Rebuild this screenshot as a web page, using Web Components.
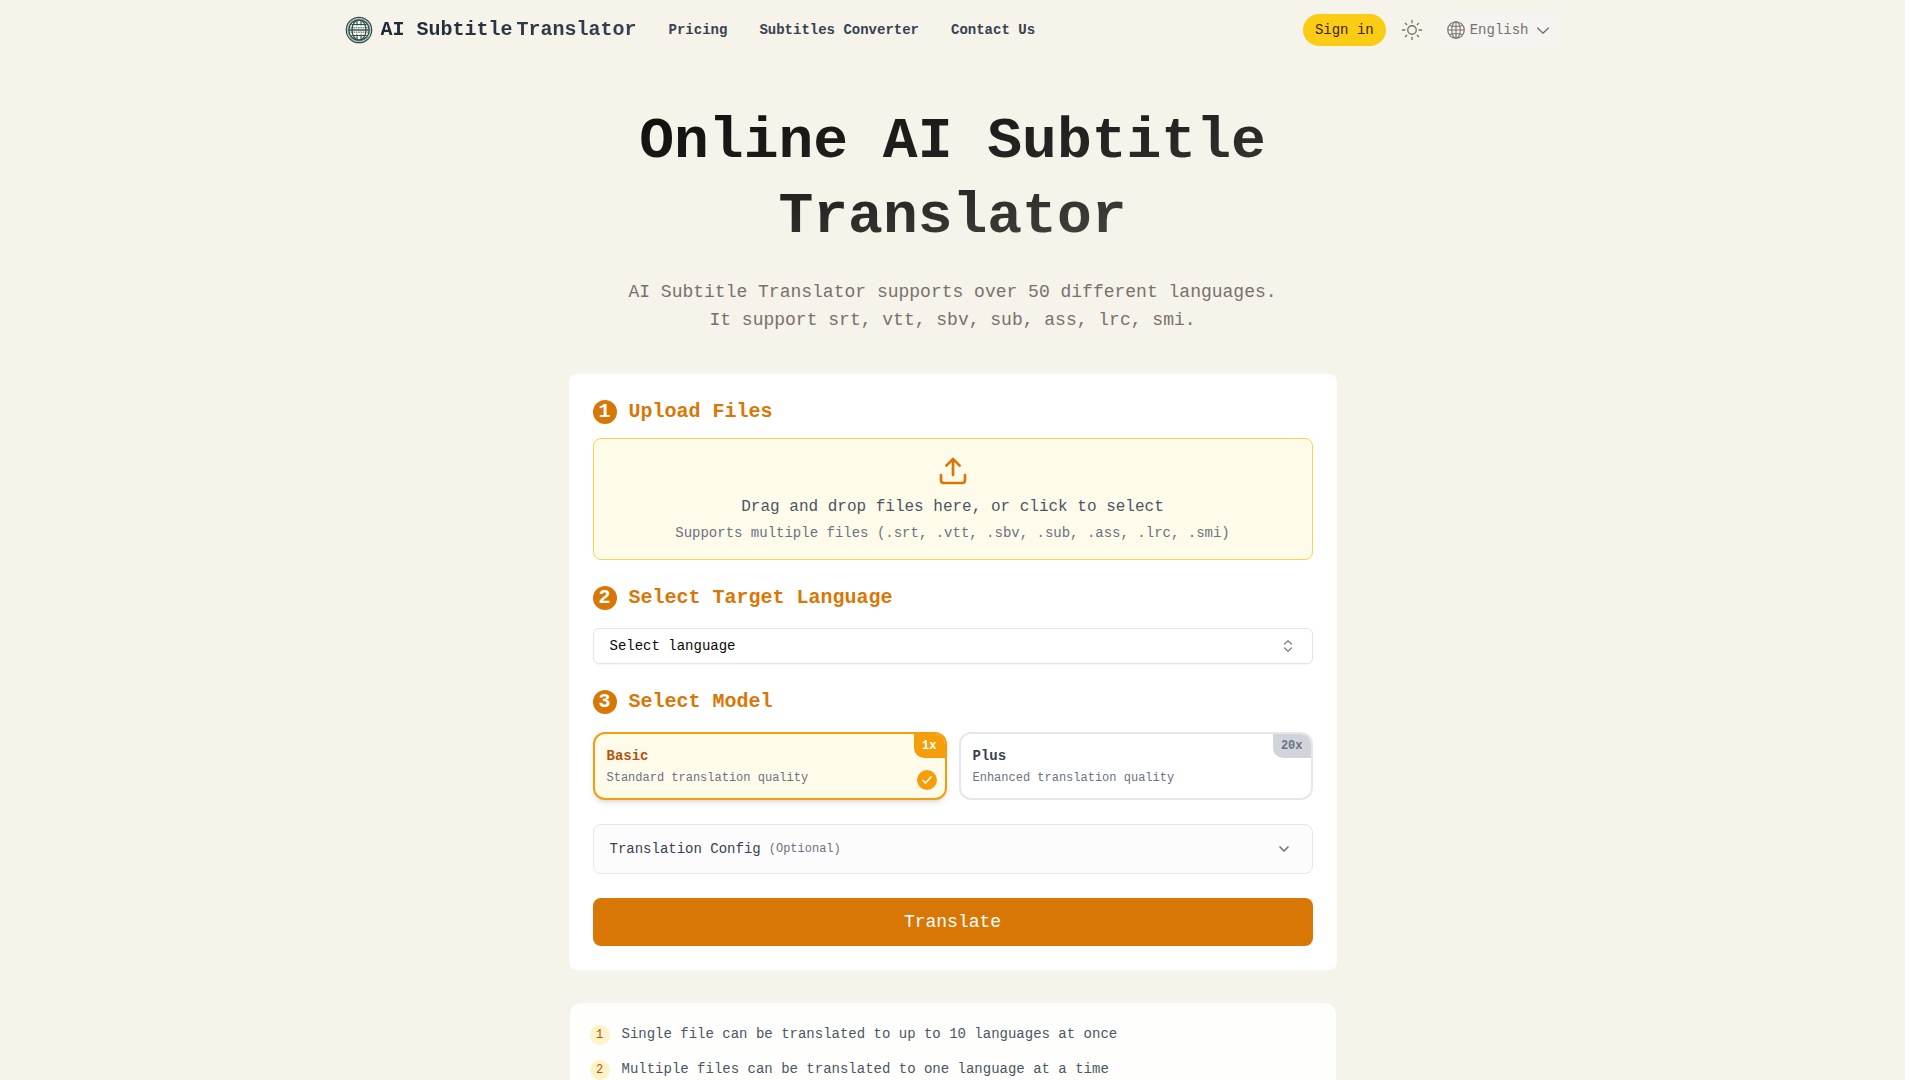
<!DOCTYPE html>
<html lang="en">
<head>
<meta charset="utf-8">
<meta name="viewport" content="width=device-width, initial-scale=1">
<title>AI Subtitle Translator</title>
<style>
    html {
        background: #fff;
        height: 100%;
        overflow: hidden;
    }
    body {
        margin: 0 15px 0 0;
        min-height: 100%;
        background: #f6f3eb;
        font-family: "Liberation Mono", monospace;
        font-size: 14px;
        line-height: 20px;
        color: #4b5563;
    }
    main {
        max-width: 768px;
        margin: 0 auto;
        padding: 44px 0 40px;
    }
</style>
</head>
<body>
<site-header></site-header>
<main>
    <page-hero>
        Online AI Subtitle Translator
        <span slot="lead">AI Subtitle Translator supports over 50 different languages.<br>It support srt, vtt, sbv, sub, ass, lrc, smi.</span>
    </page-hero>
    <translate-card>
        <form-step number="1" heading="Upload Files" tight>
            <file-drop>
                Drag and drop files here, or click to select
                <span slot="hint">Supports multiple files (.srt, .vtt, .sbv, .sub, .ass, .lrc, .smi)</span>
            </file-drop>
        </form-step>
        <form-step number="2" heading="Select Target Language">
            <language-select></language-select>
        </form-step>
        <form-step number="3" heading="Select Model">
            <model-picker></model-picker>
        </form-step>
        <config-toggle>Translation Config<span slot="note">(Optional)</span></config-toggle>
        <submit-button>Translate</submit-button>
    </translate-card>
    <tip-list>
        <tip-item number="1">Single file can be translated to up to 10 languages at once</tip-item>
        <tip-item number="2">Multiple files can be translated to one language at a time</tip-item>
    </tip-list>
</main>

<script>
// small helper: every element clones its template into an open root
function template(html) {
    const t = document.createElement("template");
    t.innerHTML = html;
    return t;
}

class BaseElement extends HTMLElement {
    constructor() {
        super();
        this.attachShadow({mode: "open"});
        this.shadowRoot.appendChild(this.constructor.template.content.cloneNode(true));
    }
}

class SiteHeader extends BaseElement {
    static template = template(/* html */`
        <style>
            :host {
                display: block;
            }
            .bar {
                display: flex;
                align-items: center;
                justify-content: space-between;
                box-sizing: border-box;
                max-width: 1280px;
                min-height: 60px;
                margin: 0 auto;
                padding: 0 32px;
            }
            .left, nav {
                display: flex;
                align-items: center;
                gap: 32px;
            }
            .right {
                display: flex;
                align-items: center;
                gap: 16px;
            }
            a {
                color: #374151;
                font-weight: 700;
                text-decoration: none;
            }
            .brand {
                display: flex;
                align-items: center;
                gap: 8px;
                font-size: 20px;
                line-height: 28px;
            }
            .words {
                display: flex;
                gap: 4px;
                background: linear-gradient(to right, #1f2937, #374151);
                background-clip: text;
                -webkit-background-clip: text;
                color: transparent;
            }
            svg {
                display: block;
            }
            button {
                display: flex;
                align-items: center;
                border: none;
                font: inherit;
                color: #78716c;
                cursor: pointer;
            }
            .signin {
                padding: 6px 12px;
                border-radius: 16px;
                background: #facc15;
                color: #422006;
            }
            .theme {
                padding: 0;
                background: none;
            }
            .lang {
                gap: 4px;
                padding: 8px;
                border-radius: 8px;
                background: #f5f4f0;
            }
        </style>
        <header class="bar">
            <div class="left">
                <a class="brand" href="#">
                    <svg width="28" height="28" viewBox="0 0 28 28" fill="none" stroke="#2f4f4b">
                        <circle cx="14" cy="14" r="12.7" stroke-width="1.2"/>
                        <circle cx="14" cy="14" r="11.4" stroke="#a3b0a9" stroke-width="1"/>
                        <circle cx="14" cy="14" r="10.2" stroke-width="1.2"/>
                        <ellipse cx="14" cy="14" rx="7" ry="10" stroke-width="1.2"/>
                        <path d="M12 4v5.5M16 4v5.5M12 18.5V24M16 18.5V24" stroke-width="1.1"/>
                        <path d="M6.5 8.5h15M6.5 19.5h15" stroke-width="1.1"/>
                        <path d="M4 14h20" stroke-width="1.4"/>
                        <path d="M4 11.8h20M4 16.2h20" stroke-width=".9" stroke-dasharray="1.5 .8"/>
                    </svg>
                    <span class="words"><span>AI Subtitle</span><span>Translator</span></span>
                </a>
                <nav>
                    <a href="#">Pricing</a>
                    <a href="#">Subtitles Converter</a>
                    <a href="#">Contact Us</a>
                </nav>
            </div>
            <div class="right">
                <button class="signin">Sign in</button>
                <button class="theme" aria-label="Toggle theme">
                    <svg width="20" height="20" viewBox="0 0 15 15" fill="none" stroke="currentColor" stroke-width="1">
                        <circle cx="7.5" cy="7.5" r="3.2"/>
                        <path d="M7.5 0v2.5M7.5 12.5V15M0 7.5h2.5M12.5 7.5H15M2.3 2.3l1.5 1.5M11.2 11.2l1.5 1.5M12.7 2.3l-1.5 1.5M3.8 11.2l-1.5 1.5"/>
                    </svg>
                </button>
                <button class="lang">
                    <svg width="20" height="20" viewBox="0 0 15 15" fill="none" stroke="currentColor" stroke-width=".8">
                        <circle cx="7.5" cy="7.5" r="6.2" stroke-width=".9"/>
                        <ellipse cx="7.5" cy="7.5" rx="3.2" ry="6.2"/>
                        <path d="M7.5 1.5v12M1.5 7.5h12M2.5 4.1q5 1.5 10 0M2.5 10.9q5-1.5 10 0"/>
                    </svg>
                    <span>English</span>
                    <svg width="20" height="20" viewBox="0 0 15 15" fill="none" stroke="currentColor" stroke-linecap="round" stroke-linejoin="round">
                        <path d="M3.5 6l4 4 4-4"/>
                    </svg>
                </button>
            </div>
        </header>
    `);
}

class PageHero extends BaseElement {
    static template = template(/* html */`
        <style>
            :host {
                display: block;
                text-align: center;
            }
            h1 {
                margin: 0 0 24px;
                font-size: 58px;
                line-height: 75px;
                font-weight: 700;
                background: linear-gradient(to bottom right, #0c0a09, #292524, #57534e);
                background-clip: text;
                -webkit-background-clip: text;
                color: transparent;
            }
            p {
                margin: 0 0 40px;
                font-size: 18px;
                line-height: 28px;
                color: #78716c;
            }
        </style>
        <h1><slot></slot></h1>
        <p><slot name="lead"></slot></p>
    `);
}

class TranslateCard extends BaseElement {
    static template = template(/* html */`
        <style>
            :host {
                display: flex;
                flex-direction: column;
                gap: 24px;
                padding: 24px;
                border-radius: 8px;
                background: #fff;
            }
        </style>
        <slot></slot>
    `);
}

class FormStep extends BaseElement {
    static template = template(/* html */`
        <style>
            :host {
                display: flex;
                flex-direction: column;
                gap: 16px;
            }
            :host([tight]) {
                gap: 12px;
            }
            h2 {
                display: flex;
                align-items: center;
                gap: 12px;
                margin: 0;
                font-size: 20px;
                line-height: 28px;
                font-weight: 700;
                color: #d97706;
            }
            .number {
                width: 24px;
                height: 24px;
                border-radius: 50%;
                background: #d97706;
                color: #fff;
                line-height: 24px;
                text-align: center;
            }
        </style>
        <h2><span class="number"></span><span class="text"></span></h2>
        <slot></slot>
    `);

    connectedCallback() {
        this.shadowRoot.querySelector(".number").textContent = this.getAttribute("number");
        this.shadowRoot.querySelector(".text").textContent = this.getAttribute("heading");
    }
}

class FileDrop extends BaseElement {
    static template = template(/* html */`
        <style>
            :host {
                display: block;
            }
            label {
                position: relative;
                display: flex;
                flex-direction: column;
                align-items: center;
                padding: 16px;
                border: 1px solid #fcd34d;
                border-radius: 8px;
                background: #fffbeb;
                cursor: pointer;
            }
            input {
                position: absolute;
                inset: 0;
                width: 100%;
                opacity: 0;
            }
            .main {
                margin: 8px 0 4px;
                font-size: 16px;
                line-height: 24px;
            }
            .hint {
                color: #6b7280;
            }
        </style>
        <label>
            <input type="file" multiple>
            <svg width="32" height="32" viewBox="0 0 24 24" fill="none" stroke="#d97706" stroke-width="2" stroke-linecap="round" stroke-linejoin="round">
                <path d="M21 15v4a2 2 0 0 1-2 2H5a2 2 0 0 1-2-2v-4"/>
                <path d="M17 8l-5-5-5 5M12 3v12"/>
            </svg>
            <span class="main"><slot></slot></span>
            <span class="hint"><slot name="hint"></slot></span>
        </label>
    `);
}

class LanguageSelect extends BaseElement {
    static template = template(/* html */`
        <style>
            :host {
                display: grid;
                align-items: center;
            }
            select, svg {
                grid-area: 1 / 1;
            }
            select {
                appearance: none;
                box-sizing: border-box;
                width: 100%;
                height: 36px;
                padding: 0 16px;
                border: 1px solid #e5e5e5;
                border-radius: 6px;
                background: #fff;
                box-shadow: 0 1px 2px 0 rgb(0 0 0 / 0.05);
                font: inherit;
                color: #0a0a0a;
            }
            svg {
                justify-self: end;
                margin-right: 17px;
                opacity: 0.5;
                pointer-events: none;
            }
        </style>
        <select aria-label="Target language">
            <option>Select language</option>
        </select>
        <svg width="16" height="16" viewBox="0 0 24 24" fill="none" stroke="#0a0a0a" stroke-width="2" stroke-linecap="round" stroke-linejoin="round">
            <path d="M7 15l5 5 5-5M7 9l5-5 5 5"/>
        </svg>
    `);
}

class ModelPicker extends BaseElement {
    static template = template(/* html */`
        <style>
            :host {
                display: grid;
                grid-template-columns: 1fr 1fr;
                gap: 12px;
            }
            label {
                position: relative;
                display: flex;
                flex-direction: column;
                gap: 4px;
                padding: 12px;
                border: 2px solid #e5e7eb;
                border-radius: 12px;
                background: #fff;
                overflow: hidden;
                cursor: pointer;
            }
            input {
                position: absolute;
                inset: 0;
                margin: 0;
                opacity: 0;
            }
            .name {
                font-weight: 700;
                color: #374151;
            }
            .about {
                font-size: 12px;
                line-height: 16px;
                color: #6b7280;
            }
            .rate {
                position: absolute;
                top: 0;
                right: 0;
                padding: 4px 8px;
                border-bottom-left-radius: 10px;
                background: #d1d5db;
                color: #6b7280;
                font-size: 12px;
                line-height: 16px;
                font-weight: 700;
            }
            .tick {
                position: absolute;
                right: 8px;
                bottom: 8px;
                display: none;
                place-items: center;
                width: 20px;
                height: 20px;
                border-radius: 50%;
                background: #f59e0b;
            }
            label:has(:checked) {
                border-color: #f59e0b;
                background: #fffbeb;
                box-shadow: 0 4px 6px -1px rgb(0 0 0 / 0.1), 0 2px 4px -2px rgb(0 0 0 / 0.1);
            }
            :checked ~ .name {
                color: #b45309;
            }
            :checked ~ .rate {
                background: #f59e0b;
                color: #fff;
            }
            :checked ~ .tick {
                display: grid;
            }
        </style>
        <label>
            <input type="radio" name="model" checked>
            <span class="name">Basic</span>
            <span class="about">Standard translation quality</span>
            <span class="rate">1x</span>
            <span class="tick">
                <svg width="12" height="12" viewBox="0 0 24 24" fill="none" stroke="#fff" stroke-width="3" stroke-linecap="round" stroke-linejoin="round">
                    <path d="M4 13l5 5L20 6"/>
                </svg>
            </span>
        </label>
        <label>
            <input type="radio" name="model">
            <span class="name">Plus</span>
            <span class="about">Enhanced translation quality</span>
            <span class="rate">20x</span>
        </label>
    `);
}

class ConfigToggle extends BaseElement {
    static template = template(/* html */`
        <style>
            :host {
                display: block;
            }
            button {
                display: flex;
                align-items: center;
                gap: 8px;
                width: 100%;
                padding: 12px 16px;
                border: 1px solid #e5e7eb;
                border-radius: 8px;
                background: #fcfcfc;
                font: inherit;
                color: #374151;
                cursor: pointer;
            }
            .note {
                font-size: 12px;
                color: #6b7280;
            }
            svg {
                margin-left: auto;
                padding: 4px;
            }
        </style>
        <button aria-expanded="false">
            <span><slot></slot></span>
            <span class="note"><slot name="note"></slot></span>
            <svg width="16" height="16" viewBox="0 0 24 24" fill="none" stroke="#6b7280" stroke-width="2.5" stroke-linecap="round" stroke-linejoin="round">
                <path d="M6 9l6 6 6-6"/>
            </svg>
        </button>
    `);
}

class SubmitButton extends BaseElement {
    static template = template(/* html */`
        <style>
            :host {
                display: block;
            }
            button {
                display: block;
                width: 100%;
                padding: 10px 16px;
                border: none;
                border-radius: 8px;
                background: #d97706;
                color: #fff;
                font: inherit;
                font-size: 18px;
                line-height: 28px;
                cursor: pointer;
            }
            button:hover {
                background: #b45309;
            }
        </style>
        <button><slot></slot></button>
    `);
}

class TipList extends BaseElement {
    static template = template(/* html */`
        <style>
            :host {
                display: flex;
                flex-direction: column;
                gap: 12px;
                margin-top: 32px;
                padding: 20px;
                border: 1px solid #f3f4f6;
                border-radius: 12px;
                background: #fefefc;
            }
        </style>
        <slot></slot>
    `);
}

class TipItem extends BaseElement {
    static template = template(/* html */`
        <style>
            :host {
                display: flex;
                align-items: center;
                gap: 12px;
                line-height: 23px;
            }
            .number {
                width: 20px;
                height: 20px;
                border-radius: 50%;
                background: #fef3c7;
                color: #b45309;
                font-size: 12px;
                line-height: 20px;
                text-align: center;
            }
        </style>
        <span class="number"></span>
        <span><slot></slot></span>
    `);

    connectedCallback() {
        this.shadowRoot.querySelector(".number").textContent = this.getAttribute("number");
    }
}

customElements.define("site-header", SiteHeader);
customElements.define("page-hero", PageHero);
customElements.define("translate-card", TranslateCard);
customElements.define("form-step", FormStep);
customElements.define("file-drop", FileDrop);
customElements.define("language-select", LanguageSelect);
customElements.define("model-picker", ModelPicker);
customElements.define("config-toggle", ConfigToggle);
customElements.define("submit-button", SubmitButton);
customElements.define("tip-list", TipList);
customElements.define("tip-item", TipItem);
</script>
</body>
</html>
